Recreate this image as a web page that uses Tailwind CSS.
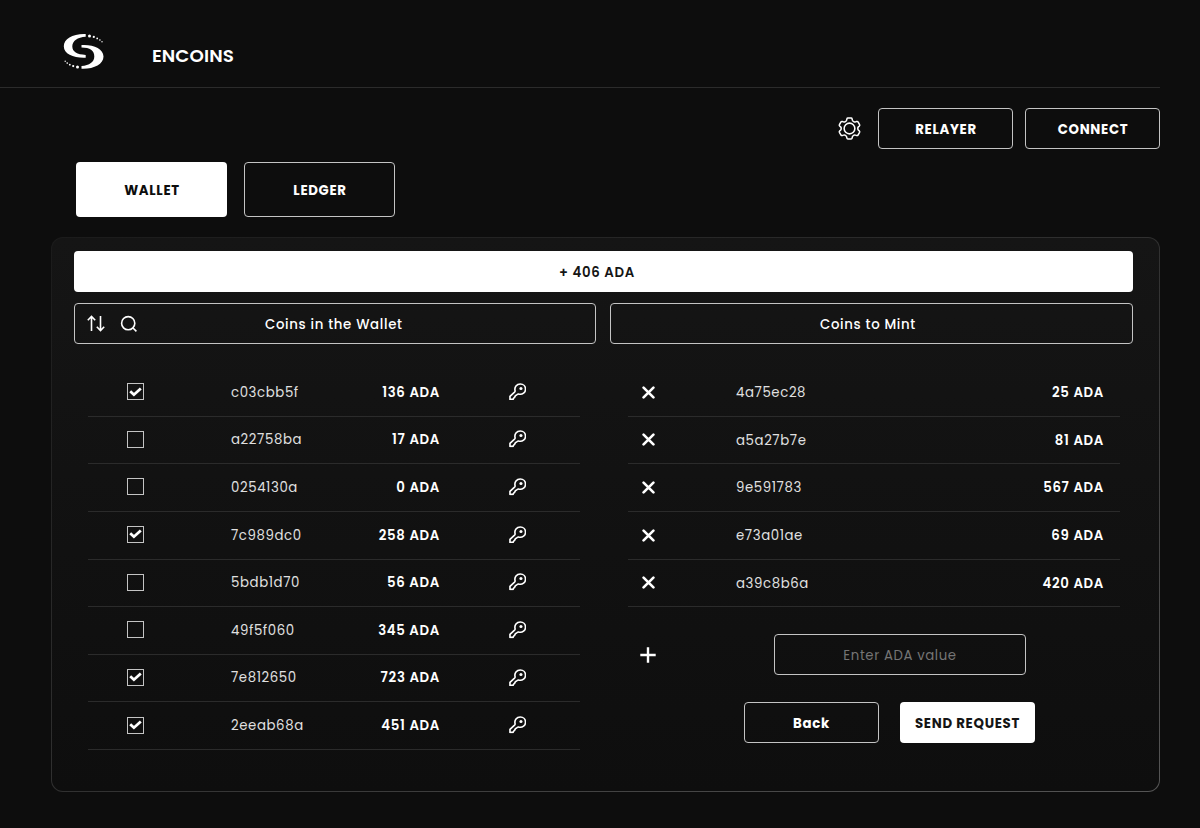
<!DOCTYPE html>
<html lang="en">
<head>
  <meta charset="utf-8">
  <title>ENCOINS</title>
  <script src="https://cdn.jsdelivr.net/npm/@tailwindcss/browser@4"></script>
</head>
<body class="h-[828px] overflow-hidden bg-[#0d0d0d] font-['Poppins','Inter',sans-serif] text-[13.3px] tracking-[.68px] text-white">

<svg class="hidden">
  <symbol id="key" viewBox="0 0 18 18" fill="none" stroke="currentColor" stroke-width="1.700" stroke-linejoin="round">
    <path d="M6.300 8.200C5.200 3.900 8 1 11.600 1C14.800 1 17 3.400 17 6.300C17 9.900 13.800 12.200 10.200 11.400C8.600 11 8.300 12.200 7.300 12.700C6.200 13.200 6.300 13.900 5.700 14.700C5 15.600 4.400 15.300 4.200 16.900H1V13.700L5.700 9.300C6.100 8.900 6.300 8.700 6.300 8.200Z"/>
    <circle cx="12.300" cy="5.700" r="1.600" fill="currentColor" stroke="none"/>
  </symbol>
  <symbol id="cross" viewBox="0 0 14 14" fill="none" stroke="currentColor" stroke-width="2.800" stroke-linecap="round">
    <path d="M1.700 1.700L12.300 12.300M12.300 1.700L1.700 12.300"/>
  </symbol>
  <symbol id="check" viewBox="0 0 14 10" fill="none" stroke="currentColor" stroke-width="3">
    <path d="M1.300 4.100L5.300 7.900L12.700 1.200"/>
  </symbol>
</svg>

<header class="flex h-[88px] w-[1160px] border-b border-[#2b2b2b] pl-[63px] pt-[33px]">
  <svg class="h-[37px] w-[41px]" viewBox="0 0 41 37" fill="white">
    <path d="M22.700 1C10 .5 .8 5.500 .8 13.300C.8 21.300 11 25.200 22.700 24.700V21.900C14 21.500 9.300 19 9.300 13.300C9.300 8 14.500 4 22.700 3.700Z"/>
    <path d="M18.500 12C30 11.200 40.500 15.500 40.500 23.500C40.500 31.500 30.500 36.200 18.500 35.700V33C26.500 32.500 31.300 28.800 31.300 23.500C31.300 17.500 27 14.700 18.500 14.600Z"/>
    <circle cx="26.500" cy="3" r="1.500"/><circle cx="30.800" cy="3.900" r="1.100"/><circle cx="34.200" cy="5.400" r=".9"/><circle cx="36.900" cy="7" r=".8"/><circle cx="39" cy="8.800" r=".7"/>
    <circle cx="14.500" cy="34" r="1.500"/><circle cx="10.200" cy="33.100" r="1.100"/><circle cx="6.800" cy="31.700" r=".9"/><circle cx="4.200" cy="30.100" r=".8"/><circle cx="2.200" cy="28.300" r=".7"/>
  </svg>
  <div class="ml-12 pt-[9px] text-[18.3px] leading-7 font-semibold tracking-[.1px]">ENCOINS</div>
</header>

<div class="mt-5 flex h-[41px] w-[1160px] items-center justify-end">
  <svg class="mr-[17px] size-[23px]" viewBox="0 0 24 24" fill="none" stroke="white" stroke-width="1.600" stroke-linejoin="round">
    <path d="M10.300 1H13.700Q14.500 1 14.700 1.900L15 3.300Q15.200 4.100 16 4.500L16.800 5Q17.500 5.400 18.300 5.100L19.500 4.700Q20.400 4.400 20.900 5.200L22.500 8Q22.900 8.800 22.300 9.400L21.300 10.300Q20.700 10.900 20.700 11.500V12.500Q20.700 13.100 21.300 13.700L22.300 14.600Q22.900 15.200 22.500 16L20.900 18.800Q20.400 19.600 19.500 19.300L18.300 18.900Q17.500 18.600 16.800 19L16 19.500Q15.200 19.900 15 20.700L14.700 22.100Q14.500 23 13.700 23H10.300Q9.500 23 9.300 22.100L9 20.700Q8.800 19.900 8 19.500L7.200 19Q6.500 18.600 5.700 18.900L4.500 19.300Q3.600 19.600 3.100 18.800L1.500 16Q1.100 15.200 1.700 14.600L2.700 13.700Q3.300 13.100 3.300 12.500V11.500Q3.300 10.900 2.700 10.300L1.700 9.400Q1.100 8.800 1.500 8L3.100 5.200Q3.600 4.400 4.500 4.700L5.700 5.100Q6.500 5.400 7.200 5L8 4.500Q8.800 4.100 9 3.300L9.300 1.900Q9.500 1 10.300 1Z"/>
    <circle cx="12" cy="12" r="5.600"/>
  </svg>
  <button class="mr-3 h-[41px] w-[135px] rounded border border-[#c4c4c4] pt-[2px] pl-px font-bold">RELAYER</button>
  <button class="h-[41px] w-[135px] rounded border border-[#c4c4c4] pt-[2px] pl-px font-bold">CONNECT</button>
</div>

<div class="mt-[13px] ml-[76px] flex gap-[17px]">
  <button class="h-[55px] w-[151px] rounded bg-white pt-[2px] pl-px font-bold text-[#0d0d0d]">WALLET</button>
  <button class="h-[55px] w-[151px] rounded border border-[#c4c4c4] pt-[2px] pl-px font-bold">LEDGER</button>
</div>

<main class="mt-5 ml-[51px] h-[555px] w-[1109px] rounded-xl bg-linear-to-br from-[#1b1b1b] via-[#303030] to-[#555] p-px">
  <div class="h-full rounded-[11px] bg-linear-to-b from-[#151515] to-[#0e0e0e] pt-[13px] pl-[22px]">
    <div class="flex h-[41px] w-[1059px] items-center justify-center rounded bg-white pr-[13px] pt-[2px] font-semibold text-[#151515]">+ 406 ADA</div>
    <div class="mt-[11px] flex gap-[14px] font-medium">
      <div class="flex h-[41px] w-[522px] items-center rounded border border-[#c4c4c4]">
        <svg class="ml-[11.5px] h-[17px] w-[18px]" viewBox="0 0 18 17" fill="none" stroke="white" stroke-width="1.600">
          <path d="M4.500 16V1.500M.8 5.200L4.500 1.500L8.200 5.200M13.500 1V15.500M9.800 11.800L13.500 15.500L17.200 11.800"/>
        </svg>
        <svg class="ml-[15.5px] size-[18px]" viewBox="0 0 18 18" fill="none" stroke="white" stroke-width="1.600">
          <circle cx="8.200" cy="8.200" r="6.600"/><path d="M13 13L16.400 16.400"/>
        </svg>
        <span class="ml-[127px] pt-[2px]">Coins in the Wallet</span>
      </div>
      <div class="flex h-[41px] w-[523px] items-center justify-center rounded border border-[#c4c4c4] pr-[7px] pt-[2px]">Coins to Mint</div>
    </div>

    <div class="mt-[25px] ml-3.5 flex gap-[48px]">
      <div id="wallet" class="w-[492px]"></div>
      <div class="w-[492px]">
        <div id="mint"></div>
        <div class="mt-[27px] flex items-center">
          <svg class="ml-[12px] size-4" viewBox="0 0 16 16" fill="none" stroke="white" stroke-width="2.400"><path d="M8 .3V15.700M.3 8H15.700"/></svg>
          <input type="text" placeholder="Enter ADA value" class="ml-[118px] h-[41px] w-[252px] rounded border border-[#c4c4c4] pt-[2px] text-center tracking-[.6px] placeholder:text-[#757575]">
        </div>
        <div class="mt-[27px] ml-[116px] flex gap-[21px]">
          <button class="h-[41px] w-[135px] rounded border border-[#c4c4c4] pt-[2px] font-bold">Back</button>
          <button class="h-[41px] w-[135px] rounded bg-white pt-[2px] font-bold text-[#151515]">SEND REQUEST</button>
        </div>
      </div>
    </div>
  </div>
</main>

<script>
const coins = [
  ['c03cbb5f', 136, true],
  ['a22758ba', 17, false],
  ['0254130a', 0, false],
  ['7c989dc0', 258, true],
  ['5bdb1d70', 56, false],
  ['49f5f060', 345, false],
  ['7e812650', 723, true],
  ['2eeab68a', 451, true]
];

const toMint = [
  ['4a75ec28', 25],
  ['a5a27b7e', 81],
  ['9e591783', 567],
  ['e73a01ae', 69],
  ['a39c8b6a', 420]
];

document.getElementById('wallet').innerHTML = coins.map(([name, value, checked]) => `
  <div class="flex h-[47.65px] items-center border-b border-[#2b2b2b] pb-[1.5px]">
    <div class="ml-[39px] flex size-[17px] items-center justify-center border border-[#c4c4c4]">
      ${checked ? '<svg class="h-[10px] w-[13px]"><use href="#check"/></svg>' : ''}
    </div>
    <span class="ml-[87px] w-[90px] pt-[2px] tracking-[.6px] text-[#e0e0e0]">${name}</span>
    <span class="w-[119px] pt-[2px] text-right font-semibold">${value} ADA</span>
    <svg class="ml-[68.5px] size-[17.5px]"><use href="#key"/></svg>
  </div>
`).join('');

document.getElementById('mint').innerHTML = toMint.map(([name, value]) => `
  <div class="flex h-[47.65px] items-center border-b border-[#2b2b2b]">
    <svg class="ml-[14px] size-[13px]"><use href="#cross"/></svg>
    <span class="ml-[81px] pt-[1.5px] tracking-[.6px] text-[#e0e0e0]">${name}</span>
    <span class="mr-4 ml-auto pt-[1.5px] font-semibold">${value} ADA</span>
  </div>
`).join('');
</script>
</body>
</html>
